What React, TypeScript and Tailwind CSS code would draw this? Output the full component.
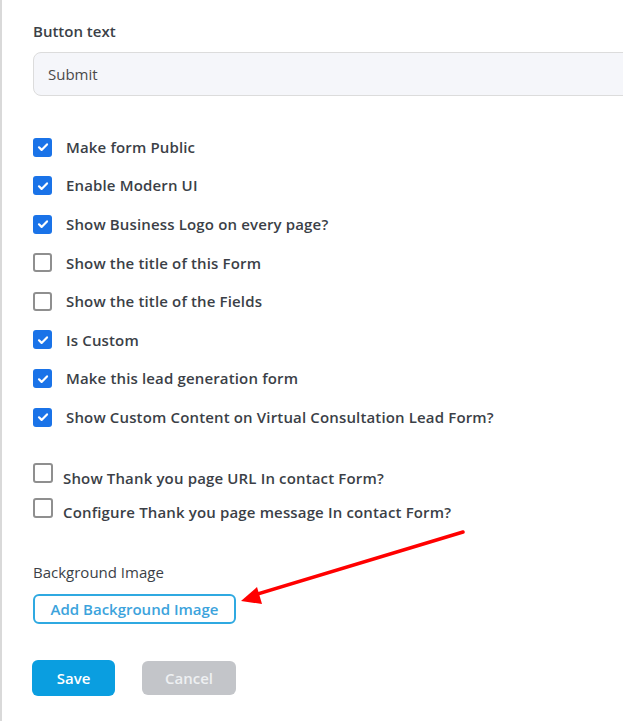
import React, { useState } from 'react';

const font = { fontFamily: '"Open Sans", "Liberation Sans", sans-serif' };

const topOptions = [
  { label: 'Make form Public', checked: true },
  { label: 'Enable Modern UI', checked: true },
  { label: 'Show Business Logo on every page?', checked: true },
  { label: 'Show the title of this Form', checked: false },
  { label: 'Show the title of the Fields', checked: false },
  { label: 'Is Custom', checked: true },
  { label: 'Make this lead generation form', checked: true },
  { label: 'Show Custom Content on Virtual Consultation Lead Form?', checked: true },
];

const Box = ({ checked, big }: { checked: boolean; big?: boolean }) =>
  checked ? (
    <span className="w-[19px] h-[19px] rounded-[3px] bg-[#1a73e8] flex items-center justify-center shrink-0">
      <svg width="12" height="12" viewBox="0 0 12 12" fill="none">
        <path d="M2 6.3l2.6 2.6L10 3.4" stroke="white" strokeWidth="2.2" strokeLinecap="round" strokeLinejoin="round" />
      </svg>
    </span>
  ) : (
    <span
      className={`${big ? 'w-[20px] h-[20px]' : 'w-[19px] h-[19px]'} rounded-[3px] border-2 border-[#8f8f8f] bg-white shrink-0`}
    />
  );

export default function App() {
  const [opts, setOpts] = useState(topOptions);

  return (
    <div className="relative w-[623px] h-[721px] bg-white border-l-2 border-[#d9d9d9] overflow-hidden" style={font}>
      <div className="pl-[31px] pt-[21px]">
        <label className="block text-[15px] font-semibold text-[#3b3f47] leading-5">Button text</label>
        <div className="mt-[11px] h-[44px] w-[640px] rounded-lg border border-[#dcdcdc] bg-[#f5f6fa] flex items-center px-[14px] text-[15px] text-[#4a4a4a]">
          Submit
        </div>

        <div className="mt-[41px] flex flex-col gap-[18.6px]">
          {opts.map((o, i) => (
            <div
              key={o.label}
              className="flex items-center gap-[14px] h-5 cursor-pointer"
              onClick={() => setOpts(opts.map((x, j) => (j === i ? { ...x, checked: !x.checked } : x)))}
            >
              <Box checked={o.checked} />
              <span className="text-[15px] font-semibold text-[#3b3f47] tracking-[0.15px]">{o.label}</span>
            </div>
          ))}
        </div>

        <div className="mt-[36px] flex flex-col gap-[10px]">
          <div className="flex items-start gap-[10px]">
            <Box checked={false} big />
            <span className="mt-[5px] text-[15px] font-semibold text-[#3b3f47] leading-5 tracking-[0.15px]">Show Thank you page URL In contact Form?</span>
          </div>
          <div className="flex items-start gap-[10px]">
            <Box checked={false} big />
            <span className="mt-[4px] text-[15px] font-semibold text-[#3b3f47] leading-5 tracking-[0.15px]">Configure Thank you page message In contact Form?</span>
          </div>
        </div>

        <div className="mt-[40px] text-[15px] text-[#3b3f47] leading-5">Background Image</div>
        <button className="mt-[12px] h-[30px] w-[203px] rounded-md border-2 border-[#2fa9e1] text-[15px] font-semibold text-[#3ca3dc] bg-white">
          Add Background Image
        </button>

        <div className="mt-[36px] flex gap-[27px] -ml-[1px]">
          <button className="h-[36px] w-[83px] rounded-md bg-[#0a9ee0] text-white text-[15px] font-semibold">Save</button>
          <button className="mt-[1px] h-[34px] w-[94px] rounded-md bg-[#c3c5c9] text-[#eef0f2] text-[15px] font-semibold">Cancel</button>
        </div>
      </div>

      <svg className="absolute left-0 top-0 pointer-events-none" width="623" height="721">
        <line x1="461" y1="532" x2="252" y2="595" stroke="#ff0000" strokeWidth="3.5" strokeLinecap="round" />
        <polygon points="239,601 255,587 260,604" fill="#ff0000" />
      </svg>
    </div>
  );
}
